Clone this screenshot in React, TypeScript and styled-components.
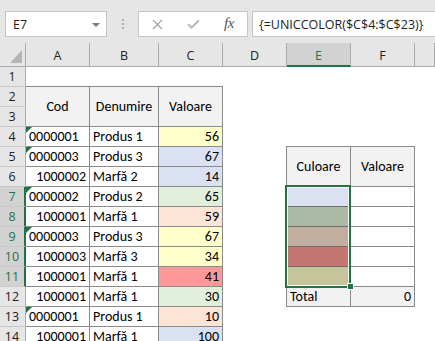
import React from 'react';
import styled, { createGlobalStyle, css } from 'styled-components';

const GlobalStyle = createGlobalStyle`
  *, *::before, *::after { box-sizing: border-box; }
  html, body { margin: 0; padding: 0; background: #ffffff; overflow: hidden; }
`;

const UI = `"Segoe UI", "Open Sans", "Noto Sans", sans-serif`;
const CELLFONT = `Carlito, Calibri, Lato, sans-serif`;
const BORDER = '#8a8a8a';
const SEL_LINE = '#6e6e6e';
const GREEN = '#217346';
const HEAD_BG = '#e6e6e6';
const HEAD_SEL = '#d2d2d2';
const HEAD_LINE = '#ababab';

const Window = styled.div`
  width: 435px;
  height: 341px;
  overflow: hidden;
  display: flex;
  flex-direction: column;
  background: #fff;
`;

const FormulaBar = styled.div`
  flex-shrink: 0;
  height: 43px;
  padding: 11px 0 0 5px;
  background: ${HEAD_BG};
  display: flex;
  align-items: flex-start;
`;

const NameBox = styled.div`
  width: 102px;
  height: 26px;
  border: 1px solid #c6c6c6;
  background: #fff;
  display: flex;
  align-items: center;
  justify-content: space-between;
  padding: 0 6px 0 7px;
  font: 12.5px ${UI};
  color: #222;
`;

const DropArrow = styled.span`
  width: 0;
  height: 0;
  border-left: 4px solid transparent;
  border-right: 4px solid transparent;
  border-top: 4px solid #7a7a7a;
  margin-top: 1px;
`;

const Grip = styled.div`
  width: 31px;
  height: 26px;
  display: flex;
  flex-direction: column;
  align-items: center;
  justify-content: center;
  gap: 2px;
`;

const GripDot = styled.span`
  width: 2px;
  height: 2px;
  background: #b0b0b0;
`;

const ButtonBox = styled.div`
  width: 110px;
  height: 26px;
  border: 1px solid #c6c6c6;
  background: #fff;
  display: grid;
  grid-template-columns: repeat(3, 36px);
  align-items: center;
  justify-items: center;
`;

const Fx = styled.span`
  font: italic 15px "Liberation Serif", "DejaVu Serif", serif;
  color: #555;
  letter-spacing: -0.5px;
  margin-top: -1px;
`;

const FormulaInput = styled.div`
  flex: 1;
  height: 26px;
  margin-left: 4px;
  border: 1px solid #c6c6c6;
  border-right: none;
  background: #fff;
  display: flex;
  align-items: center;
  padding-left: 6px;
  font: 12.5px ${UI};
  color: #222;
  white-space: nowrap;
`;

const Sheet = styled.div`
  display: grid;
  grid-template-columns: 26px 64px 69px 64px 64px 64px 64px 1fr;
  grid-template-rows: 24px repeat(14, 20px);
`;

const Corner = styled.div`
  grid-column: 1;
  grid-row: 1;
  background: ${HEAD_BG};
  border-right: 1px solid ${HEAD_LINE};
  border-bottom: 1px solid ${HEAD_LINE};
  display: flex;
  align-items: flex-end;
  justify-content: flex-end;
  padding: 0 3px 3px 0;
`;

const ColHeader = styled.div<{ $col: number; $active?: boolean }>`
  grid-column: ${p => p.$col};
  grid-row: 1;
  background: ${p => (p.$active ? HEAD_SEL : HEAD_BG)};
  border-right: 1px solid ${HEAD_LINE};
  border-bottom: ${p => (p.$active ? `2px solid ${GREEN}` : `1px solid ${HEAD_LINE}`)};
  display: flex;
  align-items: center;
  justify-content: center;
  padding-top: ${p => (p.$active ? 3 : 2)}px;
  font: 12.5px ${UI};
  color: ${p => (p.$active ? GREEN : '#222')};
`;

const RowHeader = styled.div<{ $row: number; $active?: boolean }>`
  grid-column: 1;
  grid-row: ${p => p.$row};
  background: ${p => (p.$active ? HEAD_SEL : HEAD_BG)};
  border-right: ${p => (p.$active ? `2px solid ${GREEN}` : `1px solid ${HEAD_LINE}`)};
  border-bottom: 1px solid #c9c9c9;
  display: flex;
  align-items: center;
  justify-content: center;
  padding-right: ${p => (p.$active ? 0 : 1)}px;
  font: 12.5px ${UI};
  color: ${p => (p.$active ? GREEN : '#222')};
`;

type HAlign = 'left' | 'right' | 'center';

interface CellProps {
  $col: number;
  $row: number;
  $span?: number;
  $bg?: string;
  $align?: HAlign;
  $middle?: boolean;
  $top?: boolean;
  $left?: boolean;
  $flag?: boolean;
  $line?: string;
}

const Cell = styled.div<CellProps>`
  grid-column: ${p => p.$col};
  grid-row: ${p => p.$row} / span ${p => p.$span ?? 1};
  position: relative;
  display: flex;
  align-items: ${p => (p.$middle ? 'center' : 'flex-end')};
  justify-content: ${p =>
    p.$align === 'right' ? 'flex-end' : p.$align === 'center' ? 'center' : 'flex-start'};
  padding: 0 3px ${p => (p.$middle ? 0 : 1)}px 3px;
  background: ${p => p.$bg ?? '#fff'};
  border-right: 1px solid ${p => p.$line ?? BORDER};
  border-bottom: 1px solid ${p => p.$line ?? BORDER};
  ${p =>
    p.$top &&
    css`
      border-top: 1px solid ${BORDER};
      margin-top: -1px;
    `}
  ${p =>
    p.$left &&
    css`
      border-left: 1px solid ${BORDER};
      margin-left: -1px;
    `}
  font: 14px/17px ${CELLFONT};
  color: #000;
  white-space: nowrap;
  overflow: hidden;
  ${p =>
    p.$flag &&
    css`
      &::before {
        content: '';
        position: absolute;
        left: 0;
        top: 0;
        border-top: 6px solid ${GREEN};
        border-right: 6px solid transparent;
      }
    `}
`;

const Selection = styled.div<{ $col: number; $row: number; $span: number }>`
  grid-column: ${p => p.$col};
  grid-row: ${p => p.$row} / span ${p => p.$span};
  margin: -2px 0 -1px -2px;
  border: 2px solid ${GREEN};
  box-shadow: inset 0 0 0 1px #fff;
  position: relative;
  z-index: 2;
  pointer-events: none;
`;

const FillHandle = styled.span`
  position: absolute;
  right: -5px;
  bottom: -4px;
  width: 7px;
  height: 7px;
  background: ${GREEN};
  border: 1px solid #fff;
`;

const YELLOW = '#ffffcc';
const BLUE = '#d9e1f2';
const LGREEN = '#e2efda';
const PEACH = '#fce4d6';
const SALMON = '#ff9999';

interface DataRow {
  code: string;
  isText: boolean;
  name: string;
  value: number;
  color: string;
}

const data: DataRow[] = [
  { code: '0000001', isText: true, name: 'Produs 1', value: 56, color: YELLOW },
  { code: '0000003', isText: true, name: 'Produs 3', value: 67, color: BLUE },
  { code: '1000002', isText: false, name: 'Marfă 2', value: 14, color: BLUE },
  { code: '0000002', isText: true, name: 'Produs 2', value: 65, color: LGREEN },
  { code: '1000001', isText: false, name: 'Marfă 1', value: 59, color: PEACH },
  { code: '0000003', isText: true, name: 'Produs 3', value: 67, color: YELLOW },
  { code: '1000003', isText: false, name: 'Marfă 3', value: 34, color: YELLOW },
  { code: '1000001', isText: false, name: 'Marfă 1', value: 41, color: SALMON },
  { code: '1000001', isText: false, name: 'Marfă 1', value: 30, color: LGREEN },
  { code: '0000001', isText: true, name: 'Produs 1', value: 10, color: PEACH },
  { code: '1000001', isText: false, name: 'Marfă 1', value: 100, color: BLUE },
];

const swatches = ['#d9e1f2', '#acb9a5', '#c1ae9f', '#c47672', '#c4c59d'];

const columns = ['A', 'B', 'C', 'D', 'E', 'F', ''];

// grid row for a sheet row number (grid row 1 is the column header)
const gr = (n: number) => n + 1;

export default function App() {
  return (
    <Window>
      <GlobalStyle />
      <FormulaBar>
        <NameBox>
          <span>E7</span>
          <DropArrow />
        </NameBox>
        <Grip>
          <GripDot />
          <GripDot />
          <GripDot />
        </Grip>
        <ButtonBox>
          <svg width="11" height="11" viewBox="0 0 11 11">
            <path d="M1 1L10 10M10 1L1 10" stroke="#a0a0a0" strokeWidth="1.1" fill="none" />
          </svg>
          <svg width="13" height="10" viewBox="0 0 13 10">
            <path d="M1 5.2L4.6 8.6L12 1.2" stroke="#b8b8b8" strokeWidth="2" fill="none" />
          </svg>
          <Fx>fx</Fx>
        </ButtonBox>
        <FormulaInput>{'{=UNICCOLOR($C$4:$C$23)}'}</FormulaInput>
      </FormulaBar>

      <Sheet>
        <Corner>
          <svg width="12" height="13" viewBox="0 0 12 13">
            <path d="M12 0V13H0Z" fill="#b4b4b4" />
          </svg>
        </Corner>
        {columns.map((c, i) => (
          <ColHeader key={i} $col={i + 2} $active={c === 'E'}>
            {c}
          </ColHeader>
        ))}
        {Array.from({ length: 14 }, (_, i) => i + 1).map(n => (
          <RowHeader key={n} $row={gr(n)} $active={n >= 7 && n <= 11}>
            {n}
          </RowHeader>
        ))}

        {/* Left table header */}
        <Cell $col={2} $row={gr(2)} $span={2} $bg="#f2f2f2" $align="center" $middle $top>
          Cod
        </Cell>
        <Cell $col={3} $row={gr(2)} $span={2} $bg="#f2f2f2" $align="center" $middle $top>
          Denumire
        </Cell>
        <Cell $col={4} $row={gr(2)} $span={2} $bg="#f2f2f2" $align="center" $middle $top>
          Valoare
        </Cell>

        {data.map((d, i) => {
          const row = gr(4 + i);
          return (
            <React.Fragment key={i}>
              <Cell $col={2} $row={row} $align={d.isText ? 'left' : 'right'} $flag={d.isText}>
                {d.code}
              </Cell>
              <Cell $col={3} $row={row}>
                {d.name}
              </Cell>
              <Cell $col={4} $row={row} $bg={d.color} $align="right">
                {d.value}
              </Cell>
            </React.Fragment>
          );
        })}

        {/* Right table */}
        <Cell $col={6} $row={gr(5)} $span={2} $bg="#f2f2f2" $align="center" $middle $top $left>
          Culoare
        </Cell>
        <Cell $col={7} $row={gr(5)} $span={2} $bg="#f2f2f2" $align="center" $middle $top>
          Valoare
        </Cell>
        {swatches.map((c, i) => (
          <React.Fragment key={i}>
            <Cell $col={6} $row={gr(7 + i)} $bg={c} $left $line={SEL_LINE} />
            <Cell $col={7} $row={gr(7 + i)} />
          </React.Fragment>
        ))}
        <Cell $col={6} $row={gr(12)} $bg="#f2f2f2" $left>
          Total
        </Cell>
        <Cell $col={7} $row={gr(12)} $bg="#f2f2f2" $align="right">
          0
        </Cell>

        <Selection $col={6} $row={gr(7)} $span={5}>
          <FillHandle />
        </Selection>
      </Sheet>
    </Window>
  );
}
